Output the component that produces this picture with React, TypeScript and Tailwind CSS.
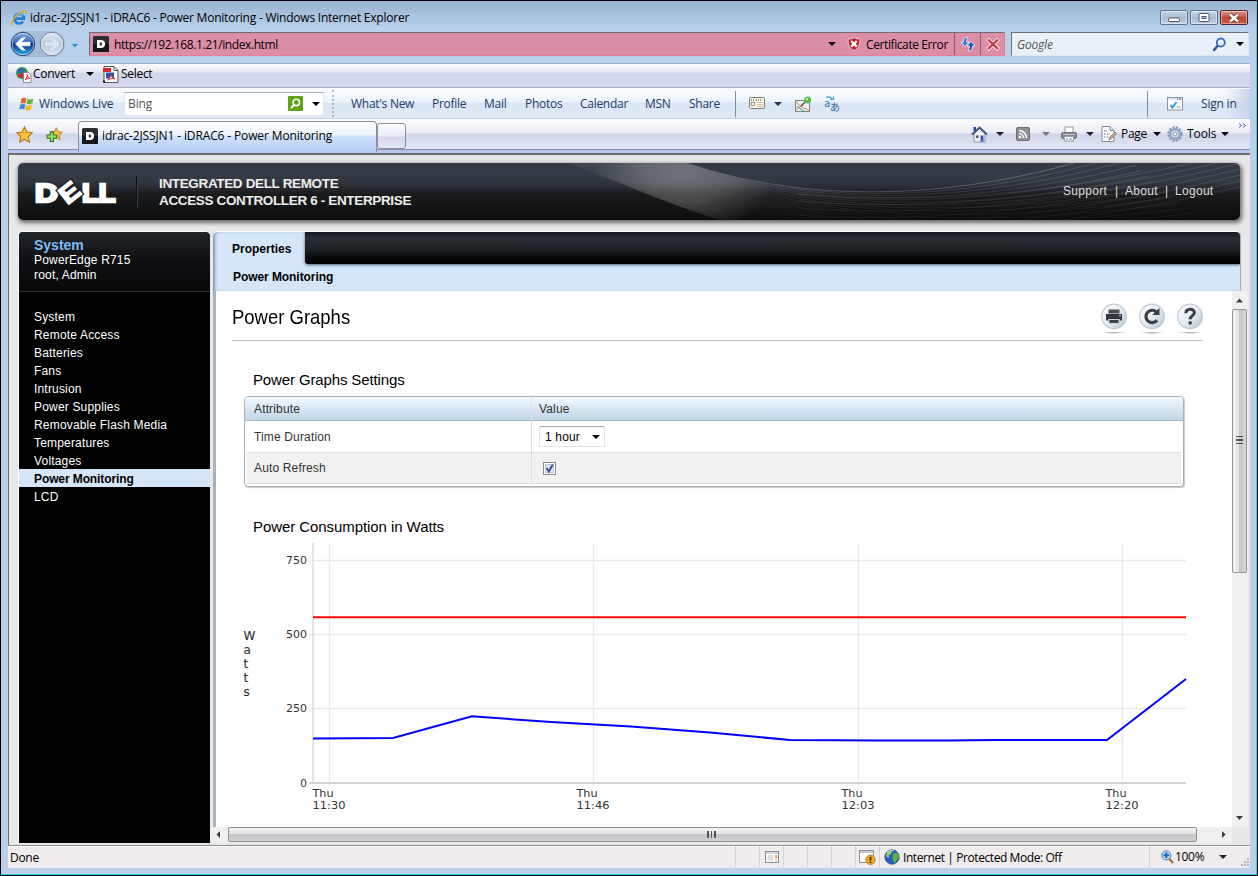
import { useState } from "react";
import type { ReactNode } from "react";

const NAV = [
  "System",
  "Remote Access",
  "Batteries",
  "Fans",
  "Intrusion",
  "Power Supplies",
  "Removable Flash Media",
  "Temperatures",
  "Voltages",
  "Power Monitoring",
  "LCD",
];

const LIVE_LINKS = [
  { label: "What's New", cls: "w-[81px]" },
  { label: "Profile", cls: "w-[52px]" },
  { label: "Mail", cls: "w-[41px]" },
  { label: "Photos", cls: "w-[55px]" },
  { label: "Calendar", cls: "w-[65px]" },
  { label: "MSN", cls: "w-[44px]" },
  { label: "Share", cls: "w-[46px]" },
];

// chart space: origin is the top left corner of the svg
const Y_TICKS = [
  { y: 20.5, label: "750" },
  { y: 94.5, label: "500" },
  { y: 168.5, label: "250" },
];
const X_TICKS = [
  { x: 89.5, label: "11:30" },
  { x: 353.5, label: "11:46" },
  { x: 618.5, label: "12:03" },
  { x: 882.5, label: "12:20" },
];
const WATTS = "73,198.5 153,198 232,176.3 311,182 391,186.5 470,192.5 550,200 640,200.5 710,200.5 755,200 867,200 946,139";

function Caret({ className = "text-black" }: { className?: string }) {
  return (
    <svg width="8" height="4" viewBox="0 0 8 4" className={`shrink-0 ${className}`}>
      <path d="M0 0h8L4 4z" fill="currentColor" />
    </svg>
  );
}

function Favicon() {
  return (
    <svg width="16" height="16" viewBox="0 0 16 16" className="shrink-0">
      <rect width="16" height="16" rx="1.5" fill="#2a2e35" />
      <rect x="0" y="8" width="16" height="8" fill="#15171a" />
      <path d="M4 4h4a4 4 0 0 1 0 8H4z" fill="#fff" />
      <rect x="6.800" y="6.600" width="2" height="2.800" fill="#15171a" />
    </svg>
  );
}

function IeLogo() {
  return (
    <svg width="16" height="16" viewBox="0 0 16 16" className="shrink-0">
      <path d="M3.500 8.600h9.500a4.800 4.800 0 1 0-1 3" fill="none" stroke="#1c83d8" strokeWidth="2.800" />
      <path d="M4 7.800a4.400 4.400 0 0 1 8-2" fill="none" stroke="#6cc3f5" strokeWidth="1.200" />
      <path d="M1.500 15C-.5 12.500 3 7 8 3.500S15.500 0 15 3.500" fill="none" stroke="#e9a820" strokeWidth="1.500" />
    </svg>
  );
}

function NavArrow({ forward = false }: { forward?: boolean }) {
  return (
    <svg width="26" height="26" viewBox="0 0 26 26" className="shrink-0">
      <defs>
        <linearGradient id="back" x1="0" y1="0" x2="0" y2="1">
          <stop offset="0" stopColor="#8fb4e6" />
          <stop offset=".45" stopColor="#2c5fb4" />
          <stop offset=".5" stopColor="#0c2f80" />
          <stop offset="1" stopColor="#2fb4f0" />
        </linearGradient>
        <linearGradient id="fwd" x1="0" y1="0" x2="0" y2="1">
          <stop offset="0" stopColor="#e3ebf4" />
          <stop offset=".5" stopColor="#b6c8dc" />
          <stop offset="1" stopColor="#d8e6f4" />
        </linearGradient>
      </defs>
      <circle cx="13" cy="13" r="11.700" fill={forward ? "url(#fwd)" : "url(#back)"} stroke={forward ? "#6c7f97" : "#2c4368"} />
      <circle cx="13" cy="13" r="10.700" fill="none" stroke="#fff" strokeOpacity=".5" />
      <g transform={forward ? "translate(26 0) scale(-1 1)" : undefined}>
        <path
          d="M5.500 13l6.500-6.200h3.200l-4 4.400H20v3.600h-8.800l4 4.400H12z"
          fill={forward ? "#dfe8f2" : "#fff"}
          stroke={forward ? "#cdd8e4" : "#fff"}
          strokeWidth=".7"
        />
      </g>
    </svg>
  );
}

function CaptionButton({ children, close = false }: { children: ReactNode; close?: boolean }) {
  return (
    <div
      className={`flex h-[15px] w-7 items-center justify-center rounded-[2px] border shadow-[inset_0_0_0_1px_rgba(255,255,255,0.45)] ${
        close
          ? "border-[#5b2230] bg-gradient-to-b from-[#dc9b8d] via-[#c04a36] to-[#c8563c]"
          : "border-[#62748d] bg-gradient-to-b from-[#c8d6e6] via-[#a9bdd4] to-[#bcd0e6]"
      }`}
    >
      {children}
    </div>
  );
}

function TitleBar() {
  return (
    <div className="flex h-7 items-start justify-between bg-gradient-to-b from-[#98b2d0] to-[#b9d1ea] pl-[10px] pr-2">
      <div className="flex h-7 items-center gap-[3px] pt-[5px]">
        <IeLogo />
        <span className="whitespace-nowrap tracking-[-0.23px]">
          idrac-2JSSJN1 - iDRAC6 - Power Monitoring - Windows Internet Explorer
        </span>
      </div>
      <div className="flex gap-[2px] pt-[9px]">
        <CaptionButton>
          <svg width="12" height="9" viewBox="0 0 12 9">
            <rect x=".5" y="5" width="11" height="3.500" rx="1" fill="#fff" stroke="#4a5568" />
          </svg>
        </CaptionButton>
        <CaptionButton>
          <svg width="12" height="9" viewBox="0 0 12 9">
            <rect x="1" y=".5" width="10" height="8" rx="1" fill="#fff" stroke="#4a5568" />
            <rect x="4" y="3.500" width="4" height="2" fill="#a9bdd4" stroke="#4a5568" />
          </svg>
        </CaptionButton>
        <CaptionButton close>
          <svg width="12" height="10" viewBox="0 0 12 10">
            <path d="M2 1.500l8 7M10 1.500l-8 7" stroke="#4b3440" strokeWidth="4" />
            <path d="M2 1.500l8 7M10 1.500l-8 7" stroke="#fff" strokeWidth="2.400" />
          </svg>
        </CaptionButton>
      </div>
    </div>
  );
}

function AddressRow() {
  return (
    <div className="flex h-[35px] bg-[#b9d1ea] pl-[9px] pt-[3px]">
      <div className="flex w-[79px] items-start">
        <div className="flex h-[26px] gap-[3px] rounded-full bg-[#a7bcd6]">
          <NavArrow />
          <NavArrow forward />
        </div>
        <svg width="8" height="5" viewBox="0 0 8 5" className="ml-[6px] mt-[12px] shrink-0">
          <path d="M0 .5h8L4 5z" fill="#2f8fd0" stroke="#e8f4ff" strokeWidth=".4" />
        </svg>
      </div>
      <div className="mt-px flex h-[24px] w-[916px] border border-[#6c6f78] border-b-[#e87d98] border-r-[#e87d98] bg-[#dc8ea6]">
        <div className="flex flex-1 items-center pl-[3px]">
          <Favicon />
          <span className="ml-[5px] pt-px tracking-[-0.4px]">https://192.168.1.21/index.html</span>
        </div>
        <div className="flex items-center">
          <Caret />
          <svg width="14" height="14" viewBox="0 0 14 14" className="ml-[11px]">
            <path d="M7 .5c2 1.300 4 1.500 6 1.500 0 6-1.500 9.500-6 11.500C2.500 11.500 1 8 1 2c2 0 4-.2 6-1.500z" fill="#c8202c" stroke="#d9d5d6" />
            <path d="M4.200 4l5.600 5.600M9.800 4L4.200 9.600" stroke="#fff" strokeWidth="2.200" />
          </svg>
          <span className="ml-[5px] w-[88px] whitespace-nowrap pt-px tracking-[-0.4px]">Certificate Error</span>
        </div>
        <div className="flex w-[26px] items-center justify-center border-l border-[#7c5f72]">
          <svg width="16" height="16" viewBox="0 0 16 16">
            <path d="M8 1C5 1 3.500 2.500 3.500 6H1l4 4.500L9 6H6.500C6.500 4 7 3 8 1z" fill="#2a7fd4" stroke="#eaf4ff" strokeWidth=".8" />
            <path d="M8 15c3 0 4.500-1.500 4.500-5H15l-4-4.500L7 10h2.500c0 2-.5 3-1.500 5z" fill="#1d56a8" stroke="#eaf4ff" strokeWidth=".8" />
          </svg>
        </div>
        <div className="flex w-[24px] items-center justify-center border-l border-[#7c5f72]">
          <svg width="14" height="14" viewBox="0 0 14 14">
            <path d="M1.500 2l11 10.500M12.500 2l-11 10.500" stroke="#fbe9ec" strokeWidth="4.200" />
            <path d="M2 2.500l10 9.500M12 2.500L2 12" stroke="#c23a48" strokeWidth="2.400" />
          </svg>
        </div>
      </div>
      <div className="ml-[6px] mt-px flex h-[24px] w-[238px] items-center border border-[#6c6f78] border-b-[#dbe8f5] border-r-[#dbe8f5] bg-[#e8f0f8] pl-[5px] pr-1">
        <span className="flex-1 pt-px italic tracking-[-0.2px] text-[#555]">Google</span>
        <svg width="15" height="15" viewBox="0 0 15 15" className="mr-[9px]">
          <path d="M6 8.500L2 13" stroke="#2d55a0" strokeWidth="2.600" strokeLinecap="round" />
          <circle cx="8.800" cy="5.500" r="4" fill="#eaf4fd" stroke="#3a6cc0" strokeWidth="1.800" />
        </svg>
        <Caret />
      </div>
    </div>
  );
}

function ConvertBar() {
  return (
    <div className="flex h-[25px] items-center border-b border-t border-b-[#b0afba] border-t-[#9fb0c6] bg-[linear-gradient(#fdfdff_0,#e6e9f5_8px,#d2d7ec_9px,#d5d9ed_100%)] pb-[3px] pl-[7px]">
      <svg width="17" height="17" viewBox="0 0 17 17">
        <circle cx="7" cy="7" r="6" fill="#2f9c3f" />
        <path d="M2 4c3-3 5-2 8 0L8 7 4 8z" fill="#3a62b8" />
        <path d="M3 8h4V6l4 3.500L7 13v-2H3z" fill="#d9262c" />
        <path d="M8.500 6.500h5l2.500 2.500v7.500H8.500z" fill="#fff" stroke="#777" strokeWidth=".8" />
        <path d="M10 14c2-2 2.500-4 2-5.500.5 2 1.500 3.500 3 4-2-.3-3.500.3-5 1.500z" fill="none" stroke="#d9262c" />
      </svg>
      <span className="ml-[1px] w-[53px] tracking-[-0.3px]">Convert</span>
      <Caret />
      <svg width="16" height="17" viewBox="0 0 16 17" className="ml-[9px]">
        <path d="M1 .5h10l4 4v12H1z" fill="#fff" stroke="#555" />
        <path d="M11 .5v4h4" fill="none" stroke="#555" />
        <rect x="0" y="2" width="8" height="4" fill="#d9262c" />
        <rect x="3" y="6.500" width="8" height="6" fill="#2456b0" />
        <path d="M4.500 14c2.500-2 3.500-4 3-6 .7 2.500 2 4 4.500 4.500-3-.3-5 .2-7.500 1.500z" fill="#fff" stroke="#d9262c" />
        <rect x="0" y="14.500" width="2" height="2" fill="#000" />
      </svg>
      <span className="ml-[2px] tracking-[-0.3px]">Select</span>
    </div>
  );
}

function LiveBar() {
  return (
    <div className="flex h-[31px] items-center border-b border-[#c3d3e6] bg-[linear-gradient(#f8fcff_0,#ecf4fc_14px,#dae6f5_15px,#e0eaf7_100%)] pl-[11px] pt-px text-[#1f3a66]">
      <svg width="16" height="16" viewBox="0 0 16 16">
        <path d="M2.500 2.500c2-1 3.500-1 5 0L6.500 7.500c-1.700-.8-3.300-.8-5 0z" fill="#e8642c" />
        <path d="M8.500 2.800c1.800.9 3.800.9 6-.3l-1.200 5c-2 1-4 1-5.800.3z" fill="#6db33f" />
        <path d="M1.300 8.500c1.800-.8 3.500-.8 5 0L5.300 13.500c-1.500-.9-3.200-.9-5 0z" fill="#3a86d8" />
        <path d="M7.300 8.900c1.800.8 3.800.8 5.800-.3L12 13.700c-2 1-4 1-5.800.2z" fill="#f5b921" />
      </svg>
      <span className="ml-[4px] w-[85px] whitespace-nowrap pt-px tracking-[-0.15px]">Windows Live</span>
      <div className="flex h-[24px] w-[200px] items-center border border-[#dfe5ee] border-t-[#a9b0bd] bg-white pl-[3px] pr-[3px]">
        <span className="flex-1 pt-px tracking-[-0.1px] text-[#555]">Bing</span>
        <svg width="15" height="15" viewBox="0 0 15 15" className="mr-[9px]">
          <rect width="15" height="15" rx="1" fill="#5da512" />
          <circle cx="8.300" cy="6.400" r="3.200" fill="none" stroke="#fff" strokeWidth="1.600" />
          <path d="M6 8.800l-3 3.400" stroke="#fff" strokeWidth="2" />
        </svg>
        <Caret />
      </div>
      <div className="ml-[8px] h-[27px] w-[19px] border-l-2 border-dotted border-[#a9b1c2]" />
      {LIVE_LINKS.map((l) => (
        <span key={l.label} className={`shrink-0 whitespace-nowrap pt-px tracking-[-0.28px] ${l.cls}`}>
          {l.label}
        </span>
      ))}
      <div className="h-[26px] w-px bg-[#878c98]" />
      <svg width="16" height="13" viewBox="0 0 16 13" className="ml-[13px]">
        <rect x=".5" y=".5" width="15" height="11" rx="1" fill="#f7f3df" stroke="#7d7d78" />
        <path d="M2 3h4M7 3h5" stroke="#444" strokeDasharray="1 1" />
        <path d="M8 5.500h6M8 7.500h6M8 9.500h6" stroke="#cfc8a8" />
        <rect x="2.500" y="5.500" width="3" height="3" fill="none" stroke="#9c9c90" />
      </svg>
      <Caret className="ml-[9px] text-[#1a2f55]" />
      <svg width="17" height="16" viewBox="0 0 17 16" className="ml-[13px]">
        <rect x=".5" y="4.500" width="14" height="11" fill="#eef3ee" stroke="#7a8a82" />
        <path d="M1 6l6 5 8 4M1 14l8-6" stroke="#e07a6a" fill="none" />
        <path d="M2 10l4 3 3 2" stroke="#56b5c8" strokeWidth="1.500" fill="none" />
        <path d="M6 10l5-5" stroke="#555" strokeWidth="1.500" />
        <circle cx="12.500" cy="4" r="3.500" fill="#58bb48" />
        <circle cx="11.700" cy="3" r="1.200" fill="#c4f0b8" />
      </svg>
      <div className="relative ml-[12px] h-4 w-4 font-['Noto_Sans_CJK_JP','Open_Sans',sans-serif] leading-none text-[#2b7fc0]">
        <span className="absolute left-0 top-[1px] text-[11px]">a</span>
        <span className="absolute left-[6px] top-[6px] text-[10px] text-[#3a66a0]">あ</span>
        <svg width="9" height="5" viewBox="0 0 9 5" className="absolute left-[2px] top-0">
          <path d="M0 1.500c3-1.500 5-.5 6.500 2M4 3.500h3.500V.5" fill="none" stroke="#3aa0d8" strokeWidth="1.200" />
        </svg>
      </div>
      <div className="ml-auto h-[26px] w-px bg-[#878c98]" />
      <div className="flex h-full w-[102px] items-center bg-gradient-to-r from-transparent from-75% to-[#c9d2ea] pl-[19px]">
        <svg width="16" height="14" viewBox="0 0 16 14">
          <rect x=".5" y=".5" width="15" height="12.500" fill="#fff" stroke="#8a94a4" />
          <rect x="1" y="1" width="14" height="2" fill="#dde3ec" />
          <path d="M10 2h1M12 2h2" stroke="#5b6a80" />
          <path d="M3.500 8l2 2.500L9.500 5" stroke="#2196d8" strokeWidth="1.800" fill="none" />
          <path d="M9.500 10h4" stroke="#888" />
        </svg>
        <span className="ml-[18px] whitespace-nowrap pt-px tracking-[-0.2px]">Sign in</span>
      </div>
    </div>
  );
}

const STAR = "M8 .8l2.200 4.900 5.200.6-3.900 3.600 1.100 5.300L8 12.500l-4.600 2.700 1.100-5.300L.6 6.300l5.200-.6z";

function TabBar() {
  return (
    <div className="flex h-[34px] flex-col bg-[#b4c6f2]">
      <div className="flex h-[31px] border-b border-[#8b8f9d] bg-[linear-gradient(#fdfdff_0,#e9ebf6_14px,#cfd5ea_15px,#e3e7f5_100%)]">
        <div className="flex w-[70px] items-center gap-[13px] pl-[8px]">
          <svg width="17" height="17" viewBox="0 0 16 16">
            <path d={STAR} fill="#fbbf3a" stroke="#b5731a" />
          </svg>
          <svg width="17" height="17" viewBox="0 0 16 16">
            <path d={STAR} transform="translate(3.500 1) scale(.78)" fill="#fbbf3a" stroke="#b5731a" />
            <path d="M4 5.500h3v3h3v3H7v3H4v-3H1v-3h3z" fill="#8fdd6a" stroke="#2f7d1f" />
          </svg>
        </div>
        <div className="mt-[2px] flex h-[31px] w-[299px] items-center rounded-t-[4px] border border-b-0 border-[#8b8f9d] bg-[linear-gradient(#ffffff_0,#edf4fd_13px,#cfe2fa_14px,#b6cdf6_100%)] pb-[3px] pl-[3px]">
          <Favicon />
          <span className="ml-[4px] whitespace-nowrap pt-px tracking-[-0.13px]">idrac-2JSSJN1 - iDRAC6 - Power Monitoring</span>
        </div>
        <div className="mt-[4px] h-[26px] w-[29px] rounded-[3px] border border-[#8b8f9d] bg-[linear-gradient(#fbfbfe_0,#e9ebf5_12px,#d3d8ea_13px,#e3e7f5_100%)]" />
        <div className="ml-auto flex items-center">
          <svg width="17" height="17" viewBox="0 0 17 17">
            <path d="M3 7.500l5.500-5 5.500 5V16H3z" fill="#eef1f6" stroke="#8a93a5" />
            <path d="M1 8.500L8.500 1.500 16 8.500" fill="none" stroke="#43527a" strokeWidth="1.800" />
            <rect x="2.500" y="1" width="2.500" height="4" fill="#2c45b8" />
            <rect x="9.500" y="9.500" width="3" height="6" fill="#3a5cae" />
            <rect x="5" y="9.500" width="2.500" height="2.500" fill="#555" />
          </svg>
          <Caret className="ml-[8px] text-[#222]" />
          <svg width="14" height="14" viewBox="0 0 14 14" className="ml-[12px]">
            <rect x=".5" y=".5" width="13" height="13" rx="1.500" fill="#8f9093" stroke="#6e6f73" />
            <circle cx="4" cy="10" r="1.300" fill="#fff" />
            <path d="M3 6.500A4.500 4.500 0 0 1 7.500 11M3 3.500A7.500 7.500 0 0 1 10.500 11" fill="none" stroke="#fff" strokeWidth="1.400" />
          </svg>
          <Caret className="ml-[12px] text-[#777]" />
          <svg width="16" height="16" viewBox="0 0 16 16" className="ml-[11px]">
            <rect x="4" y="1" width="8" height="6" fill="#fff" stroke="#999" />
            <rect x=".5" y="6.500" width="15" height="6" rx="1.500" fill="#85878d" stroke="#74767c" />
            <rect x="2" y="8" width="12" height="1" fill="#c4c6cb" />
            <rect x="3.500" y="10.500" width="9" height="4.500" fill="#fff" stroke="#999" />
            <path d="M5 13h2M8 13h3" stroke="#3a8fc8" />
          </svg>
          <Caret className="ml-[9px] text-[#222]" />
          <svg width="16" height="16" viewBox="0 0 16 16" className="ml-[7px]">
            <path d="M1 .5h8l4 4v11H1z" fill="#fafbfd" stroke="#7f8a9c" />
            <path d="M9 .5v4h4" fill="#d7deea" stroke="#7f8a9c" />
            <path d="M3 5h3M3 8h2M3 11h2M6 8h3M6 11h2" stroke="#555f9c" strokeDasharray="1 .6" />
            <path d="M8 14l1-3 5-5 1.500 1.500-5 5z" fill="#c8b07a" stroke="#77694a" strokeWidth=".7" />
          </svg>
          <span className="ml-[4px] w-[32px] tracking-[-0.3px]">Page</span>
          <Caret className="text-black" />
          <svg width="16" height="16" viewBox="0 0 16 16" className="ml-[6px]">
            <circle cx="8" cy="8" r="6.400" fill="none" stroke="#8a9db0" strokeWidth="2.600" strokeDasharray="2.200 1.150" />
            <circle cx="8" cy="8" r="4.700" fill="#dfe8f2" stroke="#8fa6be" strokeWidth="2.200" />
            <circle cx="8" cy="8" r="2" fill="#f6f9fd" stroke="#8197ae" />
          </svg>
          <span className="ml-[4px] w-[34px] tracking-[-0.1px]">Tools</span>
          <Caret className="text-black" />
          <svg width="9" height="5" viewBox="0 0 9 5" className="mb-[17px] ml-[9px] mr-[3px]">
            <path d="M1 .5l2.500 2L1 4.500M5 .5l2.500 2L5 4.500" fill="none" stroke="#4b5aa8" />
          </svg>
        </div>
      </div>
    </div>
  );
}

// control points of the outermost and innermost banner curves
const CURVE_A = [669, 0, 800, 45, 960, 35, 1100, -14];
const CURVE_B = [552, 0, 650, 35, 800, 130, 1240, 110];
const CURVES = Array.from({ length: 24 }, (_, i) => {
  const t = i / 23;
  const p = CURVE_A.map((a, k) => (a + (CURVE_B[k] - a) * t).toFixed(1));
  return `M${p[0]} ${p[1]}C${p[2]} ${p[3]} ${p[4]} ${p[5]} ${p[6]} ${p[7]}`;
});

function Swoosh() {
  return (
    <svg width="1222" height="57" viewBox="0 0 1222 57" className="absolute inset-0">
      <defs>
        <radialGradient id="glow" gradientUnits="userSpaceOnUse" cx="0" cy="0" r="1" gradientTransform="translate(665 12) scale(92 60)">
          <stop offset="0" stopColor="#fff" stopOpacity=".27" />
          <stop offset=".45" stopColor="#fff" stopOpacity=".2" />
          <stop offset="1" stopColor="#fff" stopOpacity="0" />
        </radialGradient>
        <linearGradient id="wave" gradientUnits="userSpaceOnUse" x1="552" y1="0" x2="1222" y2="0">
          <stop offset="0" stopColor="#fff" stopOpacity=".12" />
          <stop offset=".2" stopColor="#fff" stopOpacity=".04" />
          <stop offset=".35" stopColor="#fff" stopOpacity=".17" />
          <stop offset="1" stopColor="#fff" stopOpacity=".14" />
        </linearGradient>
        <linearGradient id="sink" x1="0" y1="0" x2="0" y2="1">
          <stop offset="0" stopColor="#fff" />
          <stop offset=".45" stopColor="#ccc" />
          <stop offset="1" stopColor="#333" />
        </linearGradient>
        <mask id="sinkMask">
          <rect width="1222" height="57" fill="url(#sink)" />
        </mask>
        <clipPath id="lens">
          <path d="M552 0C650 35 800 130 1240 110L1222 0H1060C960 35 800 45 669 0z" />
        </clipPath>
      </defs>
      <g clipPath="url(#lens)">
        <rect width="1222" height="57" fill="url(#glow)" />
      </g>
      <g fill="none" stroke="url(#wave)" strokeWidth=".9" mask="url(#sinkMask)">
        {CURVES.map((d, i) => (
          <path key={i} d={d} />
        ))}
        <path d={CURVES[0]} />
        {[0, 1, 2, 3, 4, 5, 6].map((i) => (
          <path key={`r${i}`} d={`M780 ${31 + i * 7}C920 ${44 + i * 6} 1080 ${26 + i * 5} 1222 ${i * 6 - 12}`} />
        ))}
      </g>
    </svg>
  );
}

function Banner() {
  return (
    <div className="relative ml-[9px] h-[57px] w-[1222px] rounded-[5px] bg-[linear-gradient(#353b44_0,#333942_30%,#2a2c34_42%,#191b1d_55%,#0b0c0e_100%)] shadow-[1px_2px_4px_1px_rgba(0,0,0,0.55)]">
      <Swoosh />
      <div className="relative flex h-full items-center font-['Liberation_Sans',Arial,sans-serif]">
        <svg width="90" height="36" viewBox="0 0 90 36" className="ml-[14px]" fontFamily="Liberation Sans" fontWeight="700">
          <g fill="#fff" stroke="#fff" strokeWidth="2.600">
            <text x="3" y="27.500" fontSize="26.500" textLength="23" lengthAdjust="spacingAndGlyphs">D</text>
            <text x="50" y="27.500" fontSize="26.500" textLength="33.500" lengthAdjust="spacingAndGlyphs">LL</text>
          </g>
          <g transform="translate(38 18) rotate(-38) scale(1.15 1)" fontSize="25" fill="#fff">
            <text x="-9" y="8.800" stroke="#1c1f23" strokeWidth="4">E</text>
            <text x="-9" y="8.800" stroke="#fff" strokeWidth="1.500">E</text>
          </g>
        </svg>
        <div className="ml-[14px] h-8 w-px bg-[#0c0d10] shadow-[1px_0_0_#3a3f47]" />
        <div className="ml-[22px] whitespace-nowrap text-[13.5px] font-bold leading-[17px] tracking-[-0.35px] text-[#ededeb]">
          INTEGRATED DELL REMOTE
          <br />
          ACCESS CONTROLLER 6 - ENTERPRISE
        </div>
        <div className="ml-auto flex whitespace-nowrap pb-[2px] text-[12px] tracking-[0.3px] text-[#dedede]">
          <span className="w-[52px]">Support</span>
          <span className="w-[10px]">|</span>
          <span className="w-[40px]">About</span>
          <span className="w-[10px]">|</span>
          <span className="w-[65px]">Logout</span>
        </div>
      </div>
    </div>
  );
}

function Sidebar({ active, onSelect }: { active: string; onSelect: (s: string) => void }) {
  return (
    <aside className="ml-[9px] h-[612px] w-[192px] shrink-0 overflow-hidden rounded-t-[5px] border-l border-t border-white bg-black text-[12px] tracking-[0.18px] text-white">
      <div className="h-[60px] border-b border-[#2e3036] bg-gradient-to-b from-[#22252a] via-[#0e0f12] to-[#08080a] pl-[15px] pt-[5px]">
        <div className="text-[14px] font-bold leading-4 tracking-normal text-[#7fbcf5]">System</div>
        <div className="leading-[15px]">PowerEdge R715</div>
        <div className="leading-[15px]">root, Admin</div>
      </div>
      <ul className="mt-[15px]">
        {NAV.map((item) => (
          <li
            key={item}
            onClick={() => onSelect(item)}
            className={`h-[18px] cursor-default whitespace-nowrap pl-[15px] leading-[20px] ${
              item === active ? "bg-[#d5e6f8] font-bold tracking-[-0.1px] text-black" : ""
            }`}
          >
            {item}
          </li>
        ))}
      </ul>
    </aside>
  );
}

function RoundButton({ children }: { children: ReactNode }) {
  return (
    <svg width="28" height="32" viewBox="0 0 28 32">
      <defs>
        <linearGradient id="orb" x1="0" y1="0" x2="1" y2="1">
          <stop offset="0" stopColor="#ffffff" />
          <stop offset=".5" stopColor="#e6ecf1" />
          <stop offset="1" stopColor="#b3c5d2" />
        </linearGradient>
        <radialGradient id="drop">
          <stop offset="0" stopColor="#aaa4a2" />
          <stop offset="1" stopColor="#fff" />
        </radialGradient>
      </defs>
      <circle cx="14" cy="13.500" r="12.300" fill="url(#orb)" stroke="#bccad5" strokeWidth="1.200" />
      <ellipse cx="14" cy="29.700" rx="12.500" ry="1.200" fill="url(#drop)" />
      {children}
    </svg>
  );
}

function PageTitle() {
  return (
    <div className="mx-[16px] flex h-[50px] w-[971px] justify-between border-b border-[#c6c6c6]">
      <h1 className="origin-left scale-x-[0.88] whitespace-nowrap pt-[12px] text-[21px] leading-[27px] text-black">Power Graphs</h1>
      <div className="-mr-px flex gap-[10px] pt-[12px]">
        <RoundButton>
          <rect x="8.500" y="6.500" width="11" height="4" fill="#4a4e55" />
          <path d="M6 11h16v6.500h-2.500V16h-11v1.500H6z" fill="#33373d" />
          <rect x="9" y="16.500" width="10" height="3.800" fill="#3b3f46" stroke="#d7dde2" strokeWidth=".8" />
          <circle cx="20" cy="12.800" r=".8" fill="#fff" />
        </RoundButton>
        <RoundButton>
          <path d="M19 17.300A6.200 6.200 0 1 1 18.500 9" fill="none" stroke="#3a3e45" strokeWidth="3.200" />
          <path d="M21.500 5v7h-7l2-2.500z" fill="#3a3e45" />
        </RoundButton>
        <RoundButton>
          <path d="M9.800 10.200c0-5.200 8.600-5.200 8.600-.6 0 3.200-4.200 3-4.200 6.600" fill="none" stroke="#3a3e45" strokeWidth="3" />
          <rect x="12.600" y="18.200" width="3.200" height="3.200" rx="1" fill="#3a3e45" />
        </RoundButton>
      </div>
    </div>
  );
}

function SettingsTable() {
  const [refresh, setRefresh] = useState(true);
  return (
    <div className="ml-[28px] mt-[7px] h-[91px] w-[940px] overflow-hidden rounded-[4px] border border-[#aab0b6] bg-white text-[12px] tracking-[0.15px] text-[#333] shadow-[1px_1px_1px_#c9c9c9]">
      <div className="flex h-6 items-center border-b border-[#a8bccc] bg-gradient-to-b from-[#f2f9ff] to-[#c0d5e8]">
        <div className="w-[287px] border-r border-[#d9e2ea] pl-[9px] leading-6">Attribute</div>
        <div className="pl-[7px]">Value</div>
      </div>
      <div className="mx-[2px] flex h-[32px] border-b border-[#dedede]">
        <div className="w-[285px] border-r border-[#dedede] pl-[7px] leading-[32px]">Time Duration</div>
        <div className="pl-[7px] pt-[5px]">
          <div className="flex h-[21px] w-[66px] items-center justify-between border border-[#dfe3ea] border-t-[#a9adb5] bg-white pl-[5px] pr-[4px] text-black">
            <span>1 hour</span>
            <Caret />
          </div>
        </div>
      </div>
      <div className="mx-[2px] flex h-[31px] border-b border-[#dedede] bg-[#f2f2f2]">
        <div className="w-[285px] border-r border-[#dedede] pl-[7px] leading-[30px]">Auto Refresh</div>
        <button onClick={() => setRefresh(!refresh)} className="ml-[11px] mt-[9px] h-[13px] w-[13px]">
          <svg width="13" height="13" viewBox="0 0 13 13">
            <rect x=".5" y=".5" width="12" height="12" fill="#fff" stroke="#8a8c90" />
            <rect x="2.500" y="2.500" width="8" height="8" fill="#dfe4ec" stroke="#c3c9d2" />
            {refresh && <path d="M3.500 6l2.300 3.500L9.800 2.500" fill="none" stroke="#3a5597" strokeWidth="2" />}
          </svg>
        </button>
      </div>
    </div>
  );
}

function WattsChart() {
  return (
    <svg
      width="950"
      height="275"
      viewBox="0 0 950 275"
      className="ml-[24px]"
      fontFamily="DejaVu Sans, Verdana, sans-serif"
      fontSize="10.500"
      fill="#333"
    >
      <g stroke="#ebebeb" strokeWidth="1.500">
        {Y_TICKS.map((t) => (
          <path key={t.label} d={`M69 ${t.y}H946`} />
        ))}
        {X_TICKS.map((t) => (
          <path key={t.label} d={`M${t.x} 3V247`} />
        ))}
      </g>
      <path d="M73 3V243" stroke="#dcdcdc" strokeWidth="1.500" />
      <path d="M69 243H946" stroke="#d4d4d4" strokeWidth="1.800" />
      <g textAnchor="end">
        {Y_TICKS.map((t) => (
          <text key={t.label} x="67" y={t.y + 3.5} textLength="21" lengthAdjust="spacingAndGlyphs">{t.label}</text>
        ))}
        <text x="67" y="247">0</text>
      </g>
      {X_TICKS.map((t) => (
        <g key={t.label}>
          <text x={t.x - 17} y="257" textLength="21" lengthAdjust="spacingAndGlyphs">Thu</text>
          <text x={t.x - 17} y="269" textLength="33" lengthAdjust="spacingAndGlyphs">{t.label}</text>
        </g>
      ))}
      <g fontSize="12" stroke="#333" strokeWidth=".15">
        {["W", "a", "t", "t", "s"].map((c, i) => (
          <text key={i} x="3.500" y={100 + i * 14}>{c}</text>
        ))}
      </g>
      <path d="M73 77.300H946" stroke="#ff0000" strokeWidth="2" />
      <polyline points={WATTS} fill="none" stroke="#0000ff" strokeWidth="2" />
    </svg>
  );
}

function ScrollArrow({ d }: { d: string }) {
  return (
    <svg width="7" height="7" viewBox="0 0 7 7">
      <path d={d} fill="#3a3a3a" />
    </svg>
  );
}

function VScroll() {
  return (
    <div className="flex h-[536px] w-[16px] shrink-0 flex-col items-start bg-[#f0f0f0]">
      <div className="flex h-[18px] w-[15px] items-center justify-center">
        <ScrollArrow d="M0 5.500h7L3.500 1.500z" />
      </div>
      <div className="flex h-[264px] w-[15px] flex-col items-center justify-center gap-[2px] rounded-[2px] border border-[#929292] bg-[linear-gradient(90deg,#f5f5f5_0,#e2e2e4_45%,#c5c5c9_50%,#d8d8da_100%)] pb-[2px]">
        <i className="h-[1.5px] w-[7px] bg-[#555]" />
        <i className="h-[1.5px] w-[7px] bg-[#555]" />
        <i className="h-[1.5px] w-[7px] bg-[#555]" />
      </div>
      <div className="mt-auto flex h-[20px] w-[15px] items-center justify-center">
        <ScrollArrow d="M0 2h7L3.500 6z" />
      </div>
    </div>
  );
}

function HScroll() {
  return (
    <div className="flex h-[16px] w-[1022px] items-start bg-[#f0f0f0]">
      <div className="flex h-[15px] w-[18px] items-center justify-center pr-[2px]">
        <ScrollArrow d="M5 0v7L1.500 3.500z" />
      </div>
      <div className="flex h-[15px] w-[969px] items-center justify-center gap-[2px] rounded-[2px] border border-[#929292] bg-[linear-gradient(#f5f5f5_0,#e2e2e4_45%,#c5c5c9_50%,#d0d0d3_100%)] pr-[2px]">
        <i className="h-[7px] w-[1.5px] bg-[#555]" />
        <i className="h-[7px] w-[1.5px] bg-[#555]" />
        <i className="h-[7px] w-[1.5px] bg-[#555]" />
      </div>
      <div className="ml-auto flex h-[15px] w-[18px] items-center justify-center">
        <ScrollArrow d="M2 0v7l3.500-3.500z" />
      </div>
    </div>
  );
}

function MainPanel() {
  return (
    <main className="flex w-[1039px] flex-col">
      <div className="ml-[3px] h-[60px] w-[1028px] overflow-hidden rounded-t-[5px] border-r border-t border-r-[#9fb3c8] border-t-white bg-[#d5e6f8] shadow-[inset_3px_0_3px_-1px_#7f97b0]">
        <div className="flex h-[32px] text-[12px] font-bold text-black">
          <div className="w-[92px] pl-[19px] leading-[34px]">Properties</div>
          <div className="flex-1 rounded-bl-[3px] bg-[linear-gradient(#15171c_0,#2b2d35_18%,#1f2226_50%,#050606_85%,#000_100%)] shadow-[0_1px_3px_#4a6076]" />
        </div>
        <div className="pl-[20px] text-[12px] font-bold leading-[26px] tracking-[-0.07px] text-black">Power Monitoring</div>
      </div>
      <div className="flex h-[536px]">
        <div className="ml-[3px] flex h-[536px] w-[1019px] flex-col border-l-[3px] border-[#a8b2bb] bg-white">
          <PageTitle />
          <h2 className="ml-[37px] mt-[30px] whitespace-nowrap text-[15px] leading-[18px] tracking-[-0.13px] text-black">Power Graphs Settings</h2>
          <SettingsTable />
          <h2 className="ml-[37px] mt-[31px] whitespace-nowrap text-[15px] leading-[18px] tracking-[-0.07px] text-black">Power Consumption in Watts</h2>
          <div className="mt-[4px]">
            <WattsChart />
          </div>
        </div>
        <VScroll />
      </div>
      <HScroll />
    </main>
  );
}

function StatusBar() {
  return (
    <div className="flex h-[23px] border-t border-[#8f8f8f] bg-[#f0eceb] leading-[24px] shadow-[inset_0_1px_0_#fff]">
      <span className="w-[727px] pl-[2px] tracking-[-0.3px]">Done</span>
      <div className="w-[24px] border-l border-[#d7d3d2]" />
      <div className="flex w-[24px] items-center justify-center border-l border-[#d7d3d2]">
        <svg width="14" height="12" viewBox="0 0 14 12">
          <rect x=".5" y=".5" width="13" height="11" fill="#fff" stroke="#8b8f96" />
          <path d="M1 2h12" stroke="#a9b0ba" />
          <path d="M2.500 5h6M2.500 7h6M2.500 9h6" stroke="#b9bec6" />
          <path d="M11 4v3.500M11 9v1.200" stroke="#e8962a" strokeWidth="1.600" />
        </svg>
      </div>
      <div className="w-[24px] border-l border-[#d7d3d2]" />
      <div className="w-[24px] border-l border-[#d7d3d2]" />
      <div className="w-[24px] border-l border-[#d7d3d2]" />
      <div className="flex w-[24px] items-center justify-center border-l border-[#d7d3d2]">
        <svg width="17" height="15" viewBox="0 0 17 15">
          <rect x=".5" y=".5" width="14" height="12" fill="#fff" stroke="#8b8f96" />
          <path d="M1 2h13" stroke="#c9ced6" strokeWidth="2" />
          <circle cx="11.500" cy="9.800" r="4.700" fill="#f2a820" stroke="#b3720c" strokeWidth=".8" />
          <path d="M11.500 6.800v3.600M11.500 11.500v1.400" stroke="#3b2b08" strokeWidth="1.700" />
        </svg>
      </div>
      <div className="flex flex-1 items-center border-l border-[#d7d3d2] pl-[4px]">
        <svg width="16" height="16" viewBox="0 0 16 16">
          <circle cx="8" cy="8" r="7.200" fill="#2a5fc0" stroke="#1b3e85" strokeWidth=".7" />
          <path d="M3 3.500c2-2 4-2 5-1.500L7 5 5 6 4.500 9 2 7z" fill="#8fd466" />
          <path d="M9 5l4-1.500 2 4-2 4-3 2.500-1.500-5z" fill="#5ab53c" />
          <path d="M3 3.500C5 1.500 8 1 10 2" stroke="#cfe6ff" fill="none" />
        </svg>
        <span className="ml-[3px] whitespace-nowrap pt-px tracking-[-0.42px]">Internet | Protected Mode: Off</span>
      </div>
      <div className="flex w-[101px] items-center border-l border-[#d7d3d2] pl-[11px]">
        <svg width="13" height="14" viewBox="0 0 13 14">
          <path d="M8 8.500l4 4.500" stroke="#a0653a" strokeWidth="2.200" />
          <circle cx="5.300" cy="5.300" r="4.600" fill="#bfe0fa" stroke="#5b7ea8" />
          <path d="M5.300 2.300v6M2.300 5.300h6" stroke="#1268c0" strokeWidth="2" />
        </svg>
        <span className="ml-[1px] w-[44px] tracking-[-0.3px]">100%</span>
        <Caret className="text-[#222]" />
        <svg width="9" height="9" viewBox="0 0 9 9" className="ml-auto mr-[1px] mt-[10px]" fill="#b5b2b1">
          <path d="M7 0h2v2H7zM7 3h2v2H7zM7 6h2v2H7zM4 3h2v2H4zM4 6h2v2H4zM1 6h2v2H1z" />
        </svg>
      </div>
    </div>
  );
}

export default function App() {
  const [section, setSection] = useState("Power Monitoring");

  return (
    <div className="h-[876px] w-[1258px] overflow-hidden border border-black bg-[#b9d1ea] font-['Open_Sans','Noto_Sans',sans-serif] text-[12px] leading-normal text-black">
      <div className="h-[874px] border-b border-r border-[#35d0e8]">
        <TitleBar />
        <div className="-mt-px">
          <AddressRow />
        </div>
        <div className="ml-[7px] w-[1242px]">
          <ConvertBar />
          <LiveBar />
          <TabBar />
          {/* browser viewport */}
          <div className="h-[692px] border-l border-t-2 border-[#6d6d6d] bg-[#e8e8ea] pt-[8px] font-['Liberation_Sans',Arial,sans-serif]">
            <Banner />
            <div className="mt-[11px] flex">
              <Sidebar active={section} onSelect={setSection} />
              <MainPanel />
            </div>
          </div>
          <StatusBar />
        </div>
      </div>
    </div>
  );
}
